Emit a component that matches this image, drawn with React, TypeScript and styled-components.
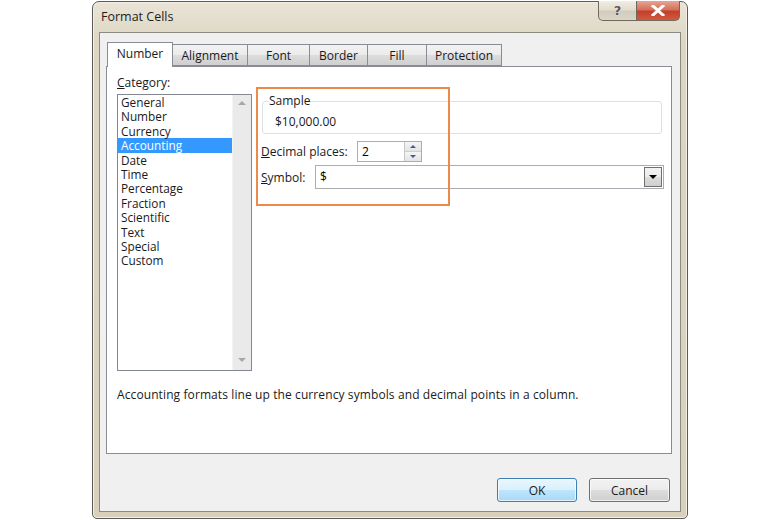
import React from 'react';
import styled, { createGlobalStyle } from 'styled-components';

const GlobalStyle = createGlobalStyle`
  html, body {
    margin: 0;
    padding: 0;
    background: #ffffff;
  }
  body {
    font-family: "Open Sans", "Noto Sans", "Liberation Sans", sans-serif;
    font-size: 12px;
    color: #000;
  }
`;

const Page = styled.div`
  width: 780px;
  height: 520px;
  display: flex;
  justify-content: flex-start;
  padding: 1px 0 0 92px;
  box-sizing: border-box;
`;

const Frame = styled.div`
  width: 596px;
  height: 518px;
  box-sizing: border-box;
  border: 1px solid #5a5a5a;
  border-radius: 7px 7px 5px 5px;
  background: linear-gradient(to bottom, #e9e4d6 0px, #ddd6c3 40px, #d8d0bb 100%);
  box-shadow: inset 0 0 0 1px #f3efe4;
  padding: 0 6px 6px 6px;
  display: flex;
  flex-direction: column;
  position: relative;
`;

const TitleBar = styled.div`
  height: 30px;
  display: flex;
  align-items: center;
  padding-left: 2px;
  font-size: 12.5px;
  color: #1e1e1e;
`;

const Caption = styled.span`
  flex: 1;
  margin-top: -1px;
`;

const CaptionButtons = styled.div`
  position: absolute;
  top: -1px;
  right: 7px;
  display: flex;
`;

const CaptionButton = styled.div<{ $close?: boolean }>`
  width: ${(p) => (p.$close ? '43px' : '39px')};
  height: 20px;
  box-sizing: border-box;
  display: flex;
  align-items: center;
  justify-content: center;
  border: 1px solid #6f6a5e;
  border-top: none;
  border-radius: ${(p) => (p.$close ? '0 0 5px 0' : '0 0 0 5px')};
  border-left: ${(p) => (p.$close ? 'none' : '1px solid #6f6a5e')};
  background: ${(p) =>
    p.$close
      ? 'linear-gradient(to bottom, #e8a493 0%, #d4715c 45%, #c4402c 55%, #d2593e 100%)'
      : 'linear-gradient(to bottom, #f1ede3 0%, #e2ddd0 45%, #d2ccbc 55%, #dcd6c7 100%)'};
  color: ${(p) => (p.$close ? '#ffffff' : '#59595b')};
  font-family: "DejaVu Sans", sans-serif;
  font-weight: bold;
  font-size: 13px;
  text-shadow: ${(p) => (p.$close ? '0 0 2px #7a1b0e' : '0 0 1px #fff')};
`;

const Client = styled.div`
  flex: 1;
  box-sizing: border-box;
  border: 1px solid #8c8a82;
  background: #f0f0f0;
  padding: 9px 9px 9px 6px;
  display: flex;
  flex-direction: column;
`;

const TabStrip = styled.div`
  display: flex;
  align-items: flex-end;
  height: 24px;
  padding-left: 1px;
  position: relative;
  z-index: 1;
`;

const Tab = styled.div<{ $active?: boolean }>`
  box-sizing: border-box;
  height: ${(p) => (p.$active ? '25px' : '22px')};
  margin-bottom: ${(p) => (p.$active ? '-1px' : '0')};
  padding: 0 9px;
  display: flex;
  align-items: center;
  justify-content: center;
  border: 1px solid #898c95;
  border-bottom: ${(p) => (p.$active ? 'none' : '1px solid #898c95')};
  margin-right: -1px;
  background: ${(p) =>
    p.$active ? '#ffffff' : 'linear-gradient(to bottom, #f2f2f2 0%, #ebebeb 50%, #dddddd 51%, #cfcfcf 100%)'};
  color: #1a1a1a;
  padding-bottom: ${(p) => (p.$active ? '3px' : '0')};
`;

const Panel = styled.div`
  box-sizing: border-box;
  height: 388px;
  width: 566px;
  border: 1px solid #898c95;
  background: #ffffff;
  padding: 8px 8px 0 10px;
  display: flex;
  flex-direction: column;
`;

const Columns = styled.div`
  display: grid;
  grid-template-columns: 135px 1fr;
  column-gap: 10px;
`;

const LeftCol = styled.div`
  display: flex;
  flex-direction: column;
`;

const FieldLabel = styled.div`
  line-height: 16px;
  height: 16px;
  margin-bottom: 3px;
  color: #1a1a1a;
`;

const ListBox = styled.div`
  box-sizing: border-box;
  height: 277px;
  border: 1px solid #828790;
  display: flex;
  background: #fff;
`;

const ListItems = styled.div`
  flex: 1;
`;

const ListItem = styled.div<{ $selected?: boolean }>`
  height: 14.4px;
  line-height: 14.4px;
  font-size: 11.8px;
  padding-left: 3px;
  background: ${(p) => (p.$selected ? '#3399ff' : 'transparent')};
  color: ${(p) => (p.$selected ? '#ffffff' : '#1a1a1a')};
  white-space: nowrap;
`;

const ScrollBar = styled.div`
  width: 18px;
  background: #eaeaea;
  border-left: 1px solid #f4f4f4;
  display: flex;
  flex-direction: column;
  justify-content: space-between;
  align-items: center;
  padding: 6px 0 8px;
`;

const Arrow = styled.div<{ $up?: boolean; $color?: string; $size?: number }>`
  width: 0;
  height: 0;
  border-left: ${(p) => p.$size ?? 4}px solid transparent;
  border-right: ${(p) => p.$size ?? 4}px solid transparent;
  ${(p) =>
    p.$up
      ? `border-bottom: ${Math.ceil((p.$size ?? 4) * 0.8)}px solid ${p.$color ?? '#a7a7a7'};`
      : `border-top: ${Math.ceil((p.$size ?? 4) * 0.8)}px solid ${p.$color ?? '#a7a7a7'};`}
`;

const RightCol = styled.div`
  position: relative;
  margin-top: 19px;
  display: flex;
  flex-direction: column;
`;

const Highlight = styled.div`
  position: absolute;
  left: -6px;
  top: -7px;
  width: 194px;
  height: 119px;
  box-sizing: border-box;
  border: 2px solid #ec8a4a;
  pointer-events: none;
`;

const SampleGroup = styled.fieldset`
  margin: 0;
  padding: 6px 12px 3px 12px;
  border: 1px solid #dde0e4;
  border-radius: 3px;
  height: 40px;
  box-sizing: border-box;
  width: 400px;

  legend {
    padding: 0;
    margin-left: -6px;
    line-height: 14px;
    color: #1a1a1a;
  }
`;

const SampleValue = styled.div`
  line-height: 16px;
  color: #1a1a1a;
`;

const Row = styled.div<{ $gap: number }>`
  display: flex;
  align-items: center;
  margin-top: ${(p) => p.$gap}px;
`;

const RowLabel = styled.div<{ $w: number }>`
  width: ${(p) => p.$w}px;
  color: #1a1a1a;
  margin-left: -1px;
`;

const SpinBox = styled.div`
  width: 65px;
  height: 21px;
  box-sizing: border-box;
  border: 1px solid #abadb3;
  display: flex;
  background: #fff;
`;

const SpinText = styled.div`
  flex: 1;
  padding-left: 4px;
  line-height: 19px;
`;

const SpinButtons = styled.div`
  width: 16px;
  display: flex;
  flex-direction: column;
  border-left: 1px solid #c8c8c8;
`;

const SpinButton = styled.div`
  flex: 1;
  display: flex;
  align-items: center;
  justify-content: center;
  background: linear-gradient(to bottom, #f5f5f5, #e3e3e3);
  border-bottom: 1px solid #cfcfcf;
  &:last-child {
    border-bottom: none;
  }
`;

const Combo = styled.div`
  width: 349px;
  height: 24px;
  box-sizing: border-box;
  border: 1px solid #abadb3;
  display: flex;
  background: #fff;
`;

const ComboText = styled.div`
  flex: 1;
  padding-left: 4px;
  line-height: 22px;
`;

const DropButton = styled.div`
  width: 18px;
  margin: 1px;
  box-sizing: border-box;
  border: 1px solid #707070;
  background: linear-gradient(to bottom, #f2f2f2 0%, #ebebeb 50%, #dddddd 51%, #cfcfcf 100%);
  display: flex;
  align-items: center;
  justify-content: center;
`;

const Description = styled.div`
  margin-top: 16px;
  line-height: 16px;
  color: #1a1a1a;
  letter-spacing: 0.1px;
`;

const ButtonRow = styled.div`
  display: flex;
  justify-content: flex-end;
  gap: 12px;
  margin-top: auto;
  padding-right: 1px;
`;

const DialogButton = styled.div<{ $default?: boolean }>`
  width: ${(p) => (p.$default ? '80px' : '81px')};
  height: 24px;
  box-sizing: border-box;
  border: 1px solid ${(p) => (p.$default ? '#3c7fb1' : '#707070')};
  border-radius: 3px;
  background: ${(p) =>
    p.$default
      ? 'linear-gradient(to bottom, #eaf6fd 0%, #d9f0fc 50%, #bee6fd 51%, #a7d9f5 100%)'
      : 'linear-gradient(to bottom, #f2f2f2 0%, #ebebeb 50%, #dddddd 51%, #cfcfcf 100%)'};
  box-shadow: inset 0 0 0 1px rgba(255, 255, 255, 0.7);
  display: flex;
  align-items: center;
  justify-content: center;
  color: #1a1a1a;
`;

const categories = [
  'General',
  'Number',
  'Currency',
  'Accounting',
  'Date',
  'Time',
  'Percentage',
  'Fraction',
  'Scientific',
  'Text',
  'Special',
  'Custom',
];

const tabs = ['Number', 'Alignment', 'Font', 'Border', 'Fill', 'Protection'];
const tabWidths = [66, 76, 63, 59, 60, 76];

const App: React.FC = () => {
  return (
    <Page>
      <GlobalStyle />
      <Frame>
        <TitleBar>
          <Caption>Format Cells</Caption>
        </TitleBar>
        <CaptionButtons>
          <CaptionButton>?</CaptionButton>
          <CaptionButton $close>
            <svg width="14" height="11" viewBox="0 0 14 11">
              <path
                d="M2 1 L12 10 M12 1 L2 10"
                stroke="#ffffff"
                strokeWidth="3"
                strokeLinecap="square"
              />
            </svg>
          </CaptionButton>
        </CaptionButtons>
        <Client>
          <TabStrip>
            {tabs.map((t, i) => (
              <Tab key={t} $active={i === 0} style={{ width: tabWidths[i] }}>
                {t}
              </Tab>
            ))}
          </TabStrip>
          <Panel>
            <Columns>
              <LeftCol>
                <FieldLabel>
                  <u>C</u>ategory:
                </FieldLabel>
                <ListBox>
                  <ListItems>
                    {categories.map((c) => (
                      <ListItem key={c} $selected={c === 'Accounting'}>
                        {c}
                      </ListItem>
                    ))}
                  </ListItems>
                  <ScrollBar>
                    <Arrow $up />
                    <Arrow />
                  </ScrollBar>
                </ListBox>
              </LeftCol>
              <RightCol>
                <SampleGroup>
                  <legend>Sample</legend>
                  <SampleValue>$10,000.00</SampleValue>
                </SampleGroup>
                <Row $gap={7}>
                  <RowLabel $w={96}>
                    <u>D</u>ecimal places:
                  </RowLabel>
                  <SpinBox>
                    <SpinText>2</SpinText>
                    <SpinButtons>
                      <SpinButton>
                        <Arrow $up $size={3} $color="#4b5a8c" />
                      </SpinButton>
                      <SpinButton>
                        <Arrow $size={3} $color="#4b5a8c" />
                      </SpinButton>
                    </SpinButtons>
                  </SpinBox>
                </Row>
                <Row $gap={3}>
                  <RowLabel $w={54}>
                    <u>S</u>ymbol:
                  </RowLabel>
                  <Combo>
                    <ComboText>$</ComboText>
                    <DropButton>
                      <Arrow $size={4} $color="#000" />
                    </DropButton>
                  </Combo>
                </Row>
                <Highlight />
              </RightCol>
            </Columns>
            <Description>
              Accounting formats line up the currency symbols and decimal points in a column.
            </Description>
          </Panel>
          <ButtonRow>
            <DialogButton $default>OK</DialogButton>
            <DialogButton>Cancel</DialogButton>
          </ButtonRow>
        </Client>
      </Frame>
    </Page>
  );
};

export default App;
